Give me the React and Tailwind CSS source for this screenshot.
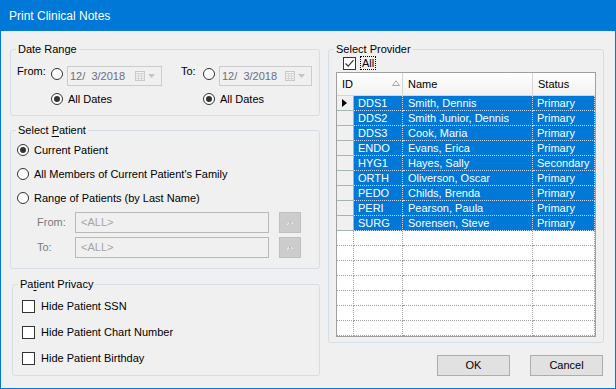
import React from "react";

const Radio = ({ checked }) => (
  <span className="flex h-[12px] w-[12px] shrink-0 items-center justify-center rounded-full border border-[#333333] bg-white">
    {checked && <span className="h-[6px] w-[6px] rounded-full bg-[#333333]" />}
  </span>
);

const Check = ({ checked }) => (
  <span className="flex h-[13px] w-[13px] shrink-0 items-center justify-center border border-[#333333] bg-white">
    {checked && (
      <svg width="11" height="11" viewBox="0 0 11 11">
        <path d="M1.5 5.5 L4.2 8.2 L9.5 2.2" fill="none" stroke="#333333" strokeWidth="1.2" />
      </svg>
    )}
  </span>
);

const DateBox = ({ cls }) => (
  <div className={`flex h-[20px] items-center border border-[#cccccc] ${cls}`}>
    <span className="flex-1 pl-[2px] text-[#6d6d7d] leading-[14px] whitespace-pre">12/  3/2018</span>
    <svg width="10" height="10" viewBox="0 0 10 10" className="shrink-0">
      <rect x="0.5" y="0.5" width="9" height="9" fill="#f4f4f4" stroke="#c8c8c8" />
      <path d="M0.5 2.5 H9.5 M0.5 5 H9.5 M0.5 7.5 H9.5 M3.5 2.5 V9.5 M6.5 2.5 V9.5" stroke="#d4d4d4" />
    </svg>
    <svg width="7" height="4" viewBox="0 0 7 4" className="ml-[3px] mr-[6px] shrink-0">
      <path d="M0 0 H7 L3.5 4 Z" fill="#c4c4c4" />
    </svg>
  </div>
);

const Legend = ({ children }) => (
  <legend className="ml-[5px] px-[2px] text-[11px] leading-[14px]">{children}</legend>
);

const LookupBtn = () => (
  <div className="flex h-[21px] w-[22px] items-center justify-center border border-[#bfbfbf] bg-[#cccccc]">
    <svg width="8" height="6" viewBox="0 0 8 6">
      <path d="M1 5 L4 1 L7 4" fill="none" stroke="#f4f4f4" strokeWidth="1" />
      <path d="M3 2 H5" stroke="#9a9a9a" strokeWidth="1" />
    </svg>
  </div>
);

const rows = [
  ["DDS1", "Smith, Dennis", "Primary"],
  ["DDS2", "Smith Junior, Dennis", "Primary"],
  ["DDS3", "Cook, Maria", "Primary"],
  ["ENDO", "Evans, Erica", "Primary"],
  ["HYG1", "Hayes, Sally", "Secondary"],
  ["ORTH", "Oliverson, Oscar", "Primary"],
  ["PEDO", "Childs, Brenda", "Primary"],
  ["PERI", "Pearson, Paula", "Primary"],
  ["SURG", "Sorensen, Steve", "Primary"],
];

export default function App() {
  return (
    <div className="flex h-[389px] w-[616px] flex-col border border-[#0078d7] bg-[#f0f0f0] font-['Liberation_Sans',Arial,sans-serif] text-[11px] text-black">
      <div className="flex h-[30px] shrink-0 items-center bg-[#0078d7] pl-[8px] text-[12px] text-white">
        Print Clinical Notes
      </div>
      <div className="flex flex-1 pt-[11px]">
        {/* Left column */}
        <div className="ml-[9px] flex w-[310px] flex-col">
          <fieldset className="h-[74px] rounded-[3px] border border-[#d5dde5]">
            <Legend>Date Range</Legend>
            <div className="mt-[10px] flex items-start">
              <span className="-mt-[2px] w-[34px] pl-[6px] leading-[14px] box-content">From:</span>
              <span className="mt-[2px]"><Radio /></span>
              <DateBox cls="ml-[4px] w-[95px]" />
              <span className="-mt-[2px] ml-[19px] w-[22px] leading-[14px]">To:</span>
              <span className="mt-[2px]"><Radio /></span>
              <DateBox cls="ml-[4px] w-[93px]" />
            </div>
            <div className="mt-[4px] flex h-[18px] items-center pl-[40px]">
              <div className="flex w-[152px] items-center">
                <Radio checked />
                <span className="ml-[5px]">All Dates</span>
              </div>
              <Radio checked />
              <span className="ml-[5px]">All Dates</span>
            </div>
          </fieldset>

          <fieldset className="mt-[7px] h-[146px] rounded-[3px] border border-[#d5dde5]">
            <Legend>
              Select <span className="underline underline-offset-[2px]">P</span>atient
            </Legend>
            <div className="mt-[1px] flex flex-col pl-[6px]">
              {[
                ["Current Patient", true],
                ["All Members of Current Patient's Family", false],
                ["Range of Patients (by Last Name)", false],
              ].map(([t, c]) => (
                <div key={t} className="flex h-[24px] items-center">
                  <Radio checked={c} />
                  <span className="ml-[5px]">{t}</span>
                </div>
              ))}
            </div>
            <div className="mt-[2px] flex flex-col gap-[4px] pl-[26px]">
              {["From:", "To:"].map((l) => (
                <div key={l} className="flex h-[21px] items-center">
                  <span className="w-[38px] text-[#7a7a7a]">{l}</span>
                  <div className="flex h-[21px] w-[194px] items-center border border-[#b9b9b9] pl-[5px] text-[#a5a5a5]">
                    &lt;ALL&gt;
                  </div>
                  <div className="ml-[10px]">
                    <LookupBtn />
                  </div>
                </div>
              ))}
            </div>
          </fieldset>

          <fieldset className="ml-[2px] mt-[8px] h-[99px] w-[308px] rounded-[3px] border border-[#d5dde5]">
            <Legend>
              Pa<span className="underline underline-offset-[2px]">t</span>ient Privacy
            </Legend>
            <div className="mt-[2px] flex flex-col pl-[9px]">
              {["Hide Patient SSN", "Hide Patient Chart Number", "Hide Patient Birthday"].map((t) => (
                <div key={t} className="flex h-[26px] items-center">
                  <Check />
                  <span className="ml-[6px]">{t}</span>
                </div>
              ))}
            </div>
          </fieldset>
        </div>

        {/* Right column */}
        <div className="ml-[8px] flex w-[276px] flex-col">
          <fieldset className="h-[301px] rounded-[3px] border border-[#d5dde5]">
            <Legend>Select Provider</Legend>
            <div className="flex h-[14px] items-center pl-[14px]">
              <Check checked />
              <span className="ml-[4px] border border-dotted border-black px-[1px] leading-[12px]">All</span>
            </div>
            <div className="ml-[7px] mt-[2px] w-[260px] border border-[#a0a0a0] bg-white">
              {/* header */}
              <div className="flex h-[23px]">
                <div className="relative flex w-[66px] items-center border-b border-r border-[#d5d5d5] bg-gradient-to-b from-white to-[#f2f2f2] pl-[5px]">
                  ID
                  <svg width="8" height="6" viewBox="0 0 8 6" className="absolute left-[55px] top-[7px]">
                    <path d="M0.5 5.5 L4 0.8 L7.5 5.5 Z" fill="none" stroke="#a8a8a8" />
                  </svg>
                </div>
                <div className="flex w-[130px] items-center border-b border-r border-[#d5d5d5] bg-gradient-to-b from-white to-[#f2f2f2] pl-[5px]">
                  Name
                </div>
                <div className="flex flex-1 items-center border-b border-[#d5d5d5] bg-gradient-to-b from-white to-[#f2f2f2] pl-[5px]">
                  Status
                </div>
              </div>
              {rows.map(([id, name, status], i) => (
                <div key={id} className="flex h-[15px] leading-[14px]">
                  <div className="flex w-[17px] items-center border-b border-r border-[#a3b6b6] bg-[#f0f0f0] pl-[5px]">
                    {i === 0 && (
                      <svg width="5" height="8" viewBox="0 0 5 8">
                        <path d="M0 0 L5 4 L0 8 Z" fill="#000" />
                      </svg>
                    )}
                  </div>
                  <div className="w-[49px] border-b border-r border-dotted border-[#c6d9ee] bg-[#0078d7] pl-[4px] text-white">
                    {id}
                  </div>
                  <div className="w-[130px] border-b border-r border-dotted border-[#c6d9ee] bg-[#0078d7] pl-[5px] text-white">
                    {name}
                  </div>
                  <div className="flex-1 border-b border-r border-dotted border-[#c6d9ee] bg-[#0078d7] pl-[4px] text-white">
                    {status}
                  </div>
                </div>
              ))}
              {Array.from({ length: 7 }).map((_, i) => (
                <div key={i} className="flex h-[15px]">
                  <div className="w-[17px] border-b border-r border-dotted border-[#a0a0a0]" />
                  <div className="w-[49px] border-b border-r border-dotted border-[#a0a0a0]" />
                  <div className="w-[130px] border-b border-r border-dotted border-[#a0a0a0]" />
                  <div className="flex-1 border-b border-r border-dotted border-[#a0a0a0]" />
                </div>
              ))}
            </div>
          </fieldset>
          <div className="mt-[12px] flex justify-end gap-[20px] pr-[1px]">
            <div className="flex h-[21px] w-[73px] items-center justify-center border border-[#adadad] bg-[#e1e1e1]">OK</div>
            <div className="flex h-[21px] w-[73px] items-center justify-center border border-[#adadad] bg-[#e1e1e1]">Cancel</div>
          </div>
        </div>
      </div>
    </div>
  );
}
